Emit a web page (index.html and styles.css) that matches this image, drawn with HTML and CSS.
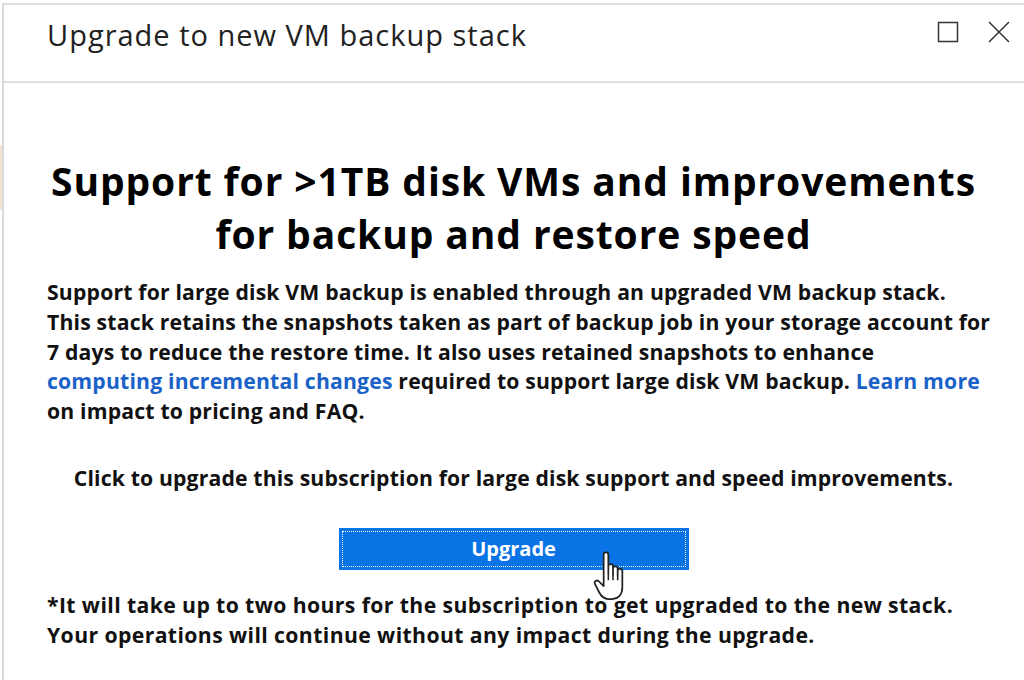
FILE: index.html
```html
<html>
  <head>
    <link rel="stylesheet" href="styles.css">
  </head>
  <body>
  <div class="blade">
    <div class="blade-header">
      <h1 class="blade-title">Upgrade to new VM backup stack</h1>
      <div class="blade-controls">
        <svg class="ctl" width="22" height="22" viewBox="0 0 22 22"><rect x="1.5" y="1.5" width="19" height="19" fill="none" stroke="#333" stroke-width="1.5"/></svg>
        <svg class="ctl" width="22" height="22" viewBox="0 0 22 22"><path d="M1 1 L21 21 M21 1 L1 21" stroke="#333" stroke-width="1.5" fill="none"/></svg>
      </div>
    </div>
    <div class="blade-content">
      <h2 class="headline">Support for &gt;1TB disk VMs and improvements<br>for backup and restore speed</h2>
      <p class="info">Support for large disk VM backup is enabled through an upgraded VM backup stack.<br>This stack retains the snapshots taken as part of backup job in your storage account for<br>7 days to reduce the restore time. It also uses retained snapshots to enhance<br><a href="#">computing incremental changes</a> required to support large disk VM backup. <a href="#">Learn more</a><br>on impact to pricing and FAQ.</p>
      <p class="cta">Click to upgrade this subscription for large disk support and speed improvements.</p>
      <div class="btn-row">
        <button class="btn-upgrade"><span class="focus">Upgrade</span></button>
        <svg class="cursor" width="40" height="56" viewBox="0 0 34 48">
          <path d="M9 4 C9 1.5 13 1.5 13 4 L13 20 L13 14 C13 11.5 17 11.5 17 14 L17 21 L17 16 C17 13.5 21 13.5 21 16 L21 22 L21 18 C21 15.5 25 15.5 25 18 L25 32 C25 38 22 42 16 42 L13 42 C9 42 7 40 5 36 L1.5 29 C0.5 27 3 25 5 27 L9 31 Z" fill="#fff" stroke="#222" stroke-width="1.5" stroke-linejoin="round"/>
          <path d="M13 20 L13 26 M17 21 L17 26 M21 22 L21 26" stroke="#222" stroke-width="1.3"/>
        </svg>
      </div>
      <p class="note">*It will take up to two hours for the subscription to get upgraded to the new stack.<br>Your operations will continue without any impact during the upgrade.</p>
    </div>
  </div>
  </body>
</html>
```

FILE: styles.css
```css
body {
  margin: 0;
  font-family: "Open Sans", "Noto Sans", sans-serif;
  color: #111;
  /* a sliver of the page behind the blade */
  background: linear-gradient(to bottom, #fff 145px, #f3e4d2 145px, #f3e4d2 210px, #fff 210px) no-repeat 0 0 / 2px 100%;
}

.blade {
  margin-left: 2px;
  margin-top: 3px;
  border-left: 2px solid #dadada;
  border-top: 2px solid #dedede;
  height: 675px;
  overflow: hidden;
  background: #fff;
}

.blade-header {
  display: flex;
  align-items: flex-start;
  justify-content: space-between;
  height: 76px;
  border-bottom: 2px solid #dedede;
}

.blade-title {
  margin: 10px 0 0 43px;
  font-size: 29px;
  line-height: 40px;
  font-weight: 400;
  color: #222;
  letter-spacing: 1px;
}

.blade-controls {
  display: flex;
  gap: 29px;
  margin: 16px 14px 0 0;
}

.blade-content {
  padding: 0 44px 0 43px;
}

.headline {
  margin: 71px 0 0;
  text-align: center;
  font-size: 39px;
  line-height: 53px;
  font-weight: 700;
  color: #000;
  letter-spacing: 0.9px;
  white-space: nowrap;
}

.info {
  margin: 17px 0 0;
  font-size: 21.2px;
  line-height: 29.8px;
  font-weight: 700;
  letter-spacing: 0.18px;
  white-space: nowrap;
}

.info a {
  color: #1a62c7;
  text-decoration: none;
}

.cta {
  margin: 37px 0 0;
  text-align: center;
  font-size: 21.2px;
  line-height: 30px;
  font-weight: 700;
  letter-spacing: 0.15px;
  white-space: nowrap;
}

.btn-row {
  position: relative;
  display: flex;
  justify-content: center;
  margin-top: 35px;
}

.btn-upgrade {
  width: 350px;
  height: 42px;
  padding: 3px;
  border: none;
  background: #0a74e6;
  font-family: inherit;
  font-size: 20px;
  font-weight: 700;
  color: #fff;
}

.btn-upgrade .focus {
  display: block;
  height: 100%;
  line-height: 34px;
  border: 1px dotted #fff;
  box-sizing: border-box;
}

.cursor {
  position: absolute;
  left: 546px;
  top: 22px;
}

.note {
  margin: 20px 0 0;
  font-size: 21.2px;
  line-height: 30.5px;
  font-weight: 700;
  letter-spacing: 0.4px;
  white-space: nowrap;
}
```
